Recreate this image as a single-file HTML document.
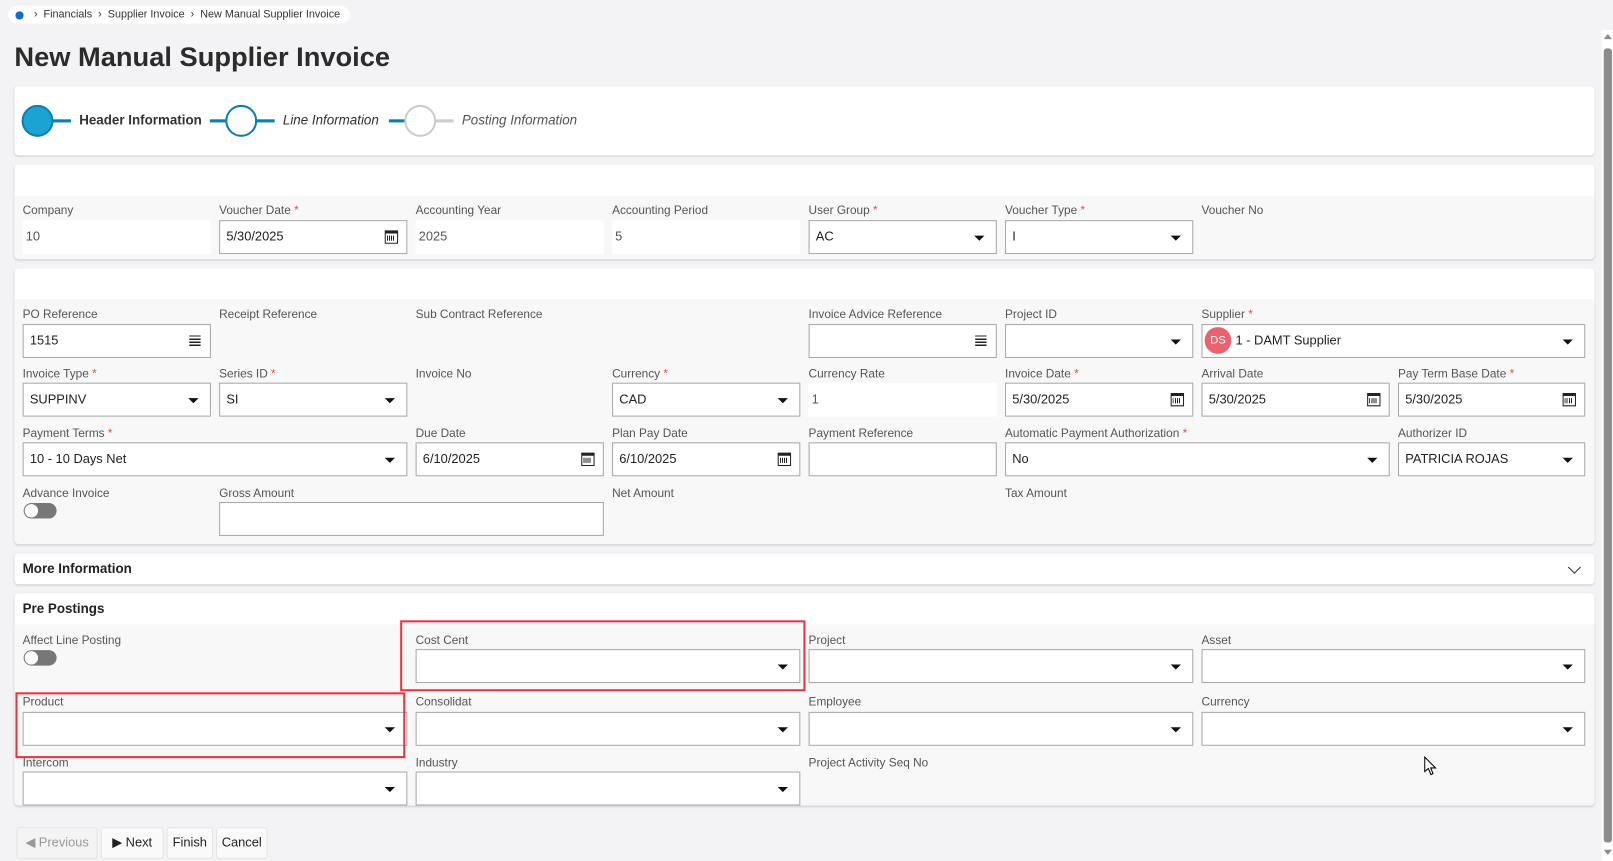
<!DOCTYPE html>
<html><head><meta charset="utf-8"><style>
*{box-sizing:border-box;margin:0;padding:0}
html,body{width:1613px;height:861px;overflow:hidden;background:#f3f2f4;font-family:"Liberation Sans",sans-serif;color:#333}
#w{position:absolute;left:0;top:0;width:1568px;height:837px;transform:scale(1.02870);transform-origin:0 0}
.a{position:absolute}
.card{position:absolute;left:14px;width:1536px;background:#f8f8f8;border-radius:4px;box-shadow:0 1px 2px rgba(0,0,0,.15);overflow:hidden}
.wh{position:absolute;left:0;top:0;width:100%;background:#fff}
.l{position:absolute;font-size:11.5px;color:#555;white-space:nowrap}
.l b{color:#d9534f;font-weight:normal}
.i{position:absolute;height:33px;background:#fff;border:1px solid #a8a8a8;font-size:12.5px;color:#222;padding:0 6px;line-height:31px;white-space:nowrap}
.ro{border:none;padding-left:3px;line-height:33px;color:#555}
.dd:after{content:"";position:absolute;right:11px;top:14px;border-left:5px solid transparent;border-right:5px solid transparent;border-top:5px solid #111}
.cal{position:absolute;right:8px;top:9px;width:13px;height:13px;border:1.5px solid #222;border-top-width:3px}
.cal:after{content:"";position:absolute;left:1px;top:2px;width:8px;height:5px;background:repeating-linear-gradient(90deg,#222 0 1px,transparent 1px 2px)}
.lst{position:absolute;right:9px;top:10px;width:11px;height:11px;background:repeating-linear-gradient(#222 0 1.3px,transparent 1.3px 3px)}
.tg{position:absolute;width:32px;height:15px;border-radius:8px;background:#777}
.tg:after{content:"";position:absolute;left:1px;top:1px;width:13px;height:13px;border-radius:50%;background:#fff}
.h{position:absolute;font-size:13px;font-weight:bold;color:#222}
.btn{position:absolute;top:804px;height:31px;background:#fafafa;border:1px solid #e4e4e4;border-radius:3px;font-size:12.5px;line-height:29px;text-align:center;color:#222}
</style></head><body><div id="w">

<div class="a" style="left:8px;top:6px;width:332px;height:17px;background:#fff;border-radius:9px"></div>
<div class="a" style="left:15px;top:11px;width:8px;height:8px;border-radius:50%;background:#0b6fd0"></div>
<div class="a" style="left:33px;top:8px;font-size:10.5px;color:#333;white-space:nowrap">›&nbsp; Financials &nbsp;›&nbsp; Supplier Invoice &nbsp;›&nbsp; New Manual Supplier Invoice</div>

<div class="a" style="left:14px;top:40px;font-size:26.5px;font-weight:bold;color:#2b2b2b">New Manual Supplier Invoice</div>

<div class="card" style="top:84px;height:67px;background:#fff"></div>
<div class="a" style="left:21px;top:102px;width:31px;height:31px;border-radius:50%;background:#1aa3d3;border:2px solid #0b7fb0"></div>
<div class="a" style="left:51px;top:116px;width:18px;height:3px;background:#0b7fb0"></div>
<div class="a" style="left:77px;top:109px;font-size:13px;font-weight:bold;color:#333">Header Information</div>
<div class="a" style="left:204px;top:116px;width:20px;height:3px;background:#0b7fb0"></div>
<div class="a" style="left:219px;top:102px;width:31px;height:31px;border-radius:50%;background:#fff;border:2px solid #0b7fb0"></div>
<div class="a" style="left:249px;top:116px;width:18px;height:3px;background:#0b7fb0"></div>
<div class="a" style="left:275px;top:109px;font-size:13px;font-style:italic;color:#333">Line Information</div>
<div class="a" style="left:378px;top:116px;width:18px;height:3px;background:#0b7fb0"></div>
<div class="a" style="left:393px;top:102px;width:31px;height:31px;border-radius:50%;background:#fff;border:2px solid #ccc"></div>
<div class="a" style="left:423px;top:116px;width:18px;height:3px;background:#ccc"></div>
<div class="a" style="left:449px;top:109px;font-size:13px;font-style:italic;color:#555">Posting Information</div>

<div class="card" style="top:160px;height:92px"><div class="wh" style="height:30px"></div></div>
<div class="l" style="left:22px;top:199px">Company</div><div class="i ro" style="left:22px;top:214px;width:183px">10</div>
<div class="l" style="left:213px;top:199px">Voucher Date <b>*</b></div><div class="i" style="left:213px;top:214px;width:183px">5/30/2025<span class="cal"></span></div>
<div class="l" style="left:404px;top:199px">Accounting Year</div><div class="i ro" style="left:404px;top:214px;width:183px">2025</div>
<div class="l" style="left:595px;top:199px">Accounting Period</div><div class="i ro" style="left:595px;top:214px;width:183px">5</div>
<div class="l" style="left:786px;top:199px">User Group <b>*</b></div><div class="i dd" style="left:786px;top:214px;width:183px">AC</div>
<div class="l" style="left:977px;top:199px">Voucher Type <b>*</b></div><div class="i dd" style="left:977px;top:214px;width:183px">I</div>
<div class="l" style="left:1168px;top:199px">Voucher No</div>

<div class="card" style="top:261px;height:268px"><div class="wh" style="height:30px"></div></div>
<div class="l" style="left:22px;top:300px">PO Reference</div><div class="i" style="left:22px;top:315px;width:183px">1515<span class="lst"></span></div>
<div class="l" style="left:213px;top:300px">Receipt Reference</div>
<div class="l" style="left:404px;top:300px">Sub Contract Reference</div>
<div class="l" style="left:786px;top:300px">Invoice Advice Reference</div><div class="i" style="left:786px;top:315px;width:183px"><span class="lst"></span></div>
<div class="l" style="left:977px;top:300px">Project ID</div><div class="i dd" style="left:977px;top:315px;width:183px"></div>
<div class="l" style="left:1168px;top:300px">Supplier <b>*</b></div><div class="i dd" style="left:1168px;top:315px;width:373px;padding-left:32px">1 - DAMT Supplier<span class="a" style="left:2px;top:2px;width:26px;height:26px;border-radius:50%;background:#e9626e;color:#fff;font-size:11px;line-height:26px;text-align:center">DS</span></div>

<div class="l" style="left:22px;top:358px">Invoice Type <b>*</b></div><div class="i dd" style="left:22px;top:372px;width:183px">SUPPINV</div>
<div class="l" style="left:213px;top:358px">Series ID <b>*</b></div><div class="i dd" style="left:213px;top:372px;width:183px">SI</div>
<div class="l" style="left:404px;top:358px">Invoice No</div>
<div class="l" style="left:595px;top:358px">Currency <b>*</b></div><div class="i dd" style="left:595px;top:372px;width:183px">CAD</div>
<div class="l" style="left:786px;top:358px">Currency Rate</div><div class="i ro" style="left:786px;top:372px;width:183px">1</div>
<div class="l" style="left:977px;top:358px">Invoice Date <b>*</b></div><div class="i" style="left:977px;top:372px;width:183px">5/30/2025<span class="cal"></span></div>
<div class="l" style="left:1168px;top:358px">Arrival Date</div><div class="i" style="left:1168px;top:372px;width:183px">5/30/2025<span class="cal"></span></div>
<div class="l" style="left:1359px;top:358px">Pay Term Base Date <b>*</b></div><div class="i" style="left:1359px;top:372px;width:182px">5/30/2025<span class="cal"></span></div>

<div class="l" style="left:22px;top:416px">Payment Terms <b>*</b></div><div class="i dd" style="left:22px;top:430px;width:374px">10 - 10 Days Net</div>
<div class="l" style="left:404px;top:416px">Due Date</div><div class="i" style="left:404px;top:430px;width:183px">6/10/2025<span class="cal"></span></div>
<div class="l" style="left:595px;top:416px">Plan Pay Date</div><div class="i" style="left:595px;top:430px;width:183px">6/10/2025<span class="cal"></span></div>
<div class="l" style="left:786px;top:416px">Payment Reference</div><div class="i" style="left:786px;top:430px;width:183px"></div>
<div class="l" style="left:977px;top:416px">Automatic Payment Authorization <b>*</b></div><div class="i dd" style="left:977px;top:430px;width:374px">No</div>
<div class="l" style="left:1359px;top:416px">Authorizer ID</div><div class="i dd" style="left:1359px;top:430px;width:182px">PATRICIA ROJAS</div>

<div class="l" style="left:22px;top:474px">Advance Invoice</div><div class="tg" style="left:23px;top:489px"></div>
<div class="l" style="left:213px;top:474px">Gross Amount</div><div class="i" style="left:213px;top:488px;width:374px"></div>
<div class="l" style="left:595px;top:474px">Net Amount</div>
<div class="l" style="left:977px;top:474px">Tax Amount</div>

<div class="card" style="top:538px;height:30px;background:#fff"></div>
<div class="h" style="left:22px;top:545px">More Information</div>
<div class="a" style="left:1526px;top:547px;width:9px;height:9px;border-right:1.3px solid #333;border-bottom:1.3px solid #333;transform:rotate(45deg)"></div>

<div class="card" style="top:577px;height:206px"><div class="wh" style="height:30px"></div></div>
<div class="h" style="left:22px;top:584px">Pre Postings</div>
<div class="l" style="left:22px;top:617px">Affect Line Posting</div><div class="tg" style="left:23px;top:632px"></div>
<div class="l" style="left:404px;top:617px">Cost Cent</div><div class="i dd" style="left:404px;top:631px;width:374px"></div>
<div class="l" style="left:786px;top:617px">Project</div><div class="i dd" style="left:786px;top:631px;width:374px"></div>
<div class="l" style="left:1168px;top:617px">Asset</div><div class="i dd" style="left:1168px;top:631px;width:373px"></div>
<div class="l" style="left:22px;top:677px">Product</div><div class="i dd" style="left:22px;top:692px;width:374px"></div>
<div class="l" style="left:404px;top:677px">Consolidat</div><div class="i dd" style="left:404px;top:692px;width:374px"></div>
<div class="l" style="left:786px;top:677px">Employee</div><div class="i dd" style="left:786px;top:692px;width:374px"></div>
<div class="l" style="left:1168px;top:677px">Currency</div><div class="i dd" style="left:1168px;top:692px;width:373px"></div>
<div class="l" style="left:22px;top:736px">Intercom</div><div class="i dd" style="left:22px;top:750px;width:374px"></div>
<div class="l" style="left:404px;top:736px">Industry</div><div class="i dd" style="left:404px;top:750px;width:374px"></div>
<div class="l" style="left:786px;top:736px">Project Activity Seq No</div>

<div class="a" style="left:389px;top:603px;width:394px;height:69px;border:2.5px solid #e8343e"></div>
<div class="a" style="left:15px;top:673px;width:379px;height:64px;border:2.5px solid #e8343e"></div>

<svg class="a" style="left:1384px;top:735px" width="14" height="20" viewBox="0 0 14 20"><path d="M1 1 L1 15 L4.5 12 L7 18 L9 17 L6.8 11.5 L11.5 11.5 Z" fill="#fff" stroke="#000" stroke-width="1"/></svg>

<div class="btn" style="left:16px;width:79px;color:#999;background:#f4f4f4">◀ Previous</div>
<div class="btn" style="left:98px;width:61px">▶ Next</div>
<div class="btn" style="left:162px;width:45px">Finish</div>
<div class="btn" style="left:210px;width:50px">Cancel</div>

<div class="a" style="left:1557px;top:29px;width:11px;height:808px;background:#fff"></div>
<div class="a" style="left:1559px;top:47px;width:8px;height:772px;background:#8c8c8c;border-radius:3px"></div>
<div class="a" style="left:1559px;top:33px;border-left:4px solid transparent;border-right:4px solid transparent;border-bottom:5px solid #8c8c8c"></div>
<div class="a" style="left:1559px;top:826px;border-left:4px solid transparent;border-right:4px solid transparent;border-top:5px solid #8c8c8c"></div>
</div></body></html>
